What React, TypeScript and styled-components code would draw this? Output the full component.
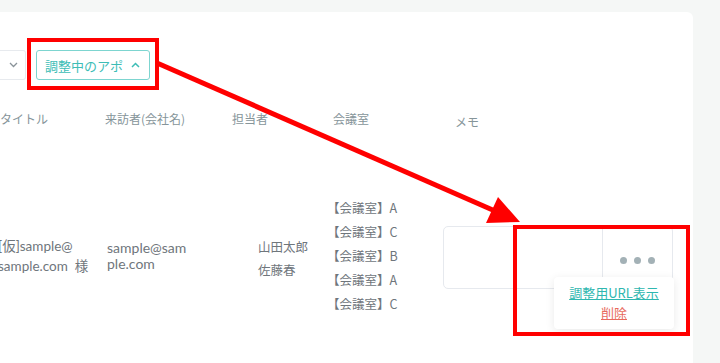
import React from 'react';
import styled, { createGlobalStyle } from 'styled-components';

const GlobalStyle = createGlobalStyle`
  html, body {
    margin: 0;
    padding: 0;
    background-color: #f5f7f6;
    font-family: 'Lato', 'Noto Sans CJK JP', sans-serif;
  }
`;

const Page = styled.div`
  position: relative;
  width: 720px;
  height: 363px;
  overflow: hidden;
  padding-top: 12px;
  box-sizing: border-box;
`;

const Card = styled.div`
  width: 693px;
  height: 351px;
  background-color: #ffffff;
  border-top-right-radius: 6px;
  padding-top: 38px;
  box-sizing: border-box;
`;

const Toolbar = styled.div`
  display: flex;
  align-items: center;
  gap: 10px;
  height: 30px;
`;

const SelectStub = styled.div`
  width: 26px;
  height: 30px;
  box-sizing: border-box;
  border: 1px solid #e7eaee;
  border-left: none;
  border-radius: 0 3px 3px 0;
  display: flex;
  align-items: center;
  justify-content: flex-start;
  padding-left: 9px;
  color: #8a9399;
`;

const StatusButton = styled.div`
  height: 30px;
  width: 114px;
  box-sizing: border-box;
  border: 1px solid #7dd5d0;
  border-radius: 3px;
  display: flex;
  align-items: center;
  padding-left: 8px;
  gap: 8px;
  color: #3dbdb6;
  font-size: 13px;
  font-family: 'Noto Sans CJK JP', sans-serif;
`;

const HeaderRow = styled.div`
  display: flex;
  align-items: center;
  margin-top: 28px;
  height: 20px;
  color: #86959a;
  font-size: 12px;
  font-family: 'Noto Sans CJK JP', sans-serif;
`;

const HeadCell = styled.div<{ $w: number; $dy?: number }>`
  width: ${(p) => p.$w}px;
  flex-shrink: 0;
  padding-top: ${(p) => p.$dy || 0}px;
`;

const BodyRow = styled.div`
  display: flex;
  align-items: center;
  margin-top: 78px;
  height: 100px;
  color: #6f767c;
  font-size: 13.5px;
`;

const Cell = styled.div<{ $w: number }>`
  width: ${(p) => p.$w}px;
  flex-shrink: 0;
  line-height: 19px;
`;

const TitleCell = styled(Cell)`
  margin-left: -2px;
  line-height: 20px;
`;

const VisitorCell = styled(Cell)`
  font-size: 14px;
  line-height: 16px;
`;

const StaffCell = styled(Cell)`
  font-family: 'Noto Sans CJK JP', sans-serif;
  font-size: 12.5px;
  line-height: 23px;
  padding-left: 26px;
  padding-top: 4px;
  box-sizing: border-box;
`;

const RoomList = styled(Cell)`
  font-family: 'Noto Sans CJK JP', sans-serif;
  font-size: 12.5px;
  line-height: 24px;
  margin-left: -6px;
`;

const MemoBox = styled.div`
  margin-left: -6px;
  margin-top: 2px;
  display: flex;
  width: 230px;
  height: 63px;
  border: 1px solid #e6e9ee;
  border-radius: 5px;
  box-sizing: border-box;
`;

const MemoArea = styled.div`
  width: 158px;
  border-right: 1px solid #e6e9ee;
`;

const ActionCell = styled.div`
  position: relative;
  flex: 1;
  display: flex;
  justify-content: center;
  align-items: center;
  gap: 7px;
  padding-top: 6px;
`;

const Dot = styled.span`
  width: 7px;
  height: 7px;
  border-radius: 50%;
  background-color: #a3b1b6;
`;

const Popup = styled.div`
  position: absolute;
  top: 50px;
  right: -2px;
  width: 120px;
  height: 52px;
  background-color: #ffffff;
  border-radius: 4px;
  box-shadow: 0 2px 10px rgba(0, 0, 0, 0.09);
  display: flex;
  flex-direction: column;
  align-items: center;
  justify-content: center;
  gap: 1px;
  font-family: 'Noto Sans CJK JP', sans-serif;
  font-size: 13px;
  line-height: 19px;
`;

const PopupLink = styled.a<{ $danger?: boolean }>`
  color: ${(p) => (p.$danger ? '#e86a5c' : '#2fb7b0')};
  text-decoration: underline;
  cursor: pointer;
`;

const Annotation = styled.svg`
  position: absolute;
  left: 0;
  top: 0;
  pointer-events: none;
`;

export default function App() {
  return (
    <>
      <GlobalStyle />
      <Page>
        <Card>
          <Toolbar>
            <SelectStub>
              <svg width="9" height="6" viewBox="0 0 9 6">
                <path d="M1 1l3.5 3.5L8 1" fill="none" stroke="#8a9399" strokeWidth="1.3" />
              </svg>
            </SelectStub>
            <StatusButton>
              <span>調整中のアポ</span>
              <svg width="9" height="6" viewBox="0 0 9 6">
                <path d="M1 5l3.5-3.5L8 5" fill="none" stroke="#3dbdb6" strokeWidth="1.5" />
              </svg>
            </StatusButton>
          </Toolbar>
          <HeaderRow>
            <HeadCell $w={105}>タイトル</HeadCell>
            <HeadCell $w={127}>来訪者(会社名)</HeadCell>
            <HeadCell $w={101}>担当者</HeadCell>
            <HeadCell $w={122}>会議室</HeadCell>
            <HeadCell $w={60} $dy={7}>メモ</HeadCell>
          </HeaderRow>
          <BodyRow>
            <TitleCell $w={109}>
              <div>[仮]sample@</div>
              <div>sample.com&nbsp; 様</div>
            </TitleCell>
            <VisitorCell $w={125}>
              <div>sample@sam</div>
              <div>ple.com</div>
            </VisitorCell>
            <StaffCell $w={101}>
              <div>山田太郎</div>
              <div>佐藤春</div>
            </StaffCell>
            <RoomList $w={122}>
              <div>【会議室】A</div>
              <div>【会議室】C</div>
              <div>【会議室】B</div>
              <div>【会議室】A</div>
              <div>【会議室】C</div>
            </RoomList>
            <MemoBox>
              <MemoArea />
              <ActionCell>
                <Dot />
                <Dot />
                <Dot />
                <Popup>
                  <PopupLink>調整用URL表示</PopupLink>
                  <PopupLink $danger>削除</PopupLink>
                </Popup>
              </ActionCell>
            </MemoBox>
          </BodyRow>
        </Card>
        <Annotation width="720" height="363" viewBox="0 0 720 363">
          <rect x="29" y="40" width="128" height="48" fill="none" stroke="#ff0000" strokeWidth="4" />
          <line x1="157" y1="63" x2="495" y2="211" stroke="#ff0000" strokeWidth="5" />
          <polygon points="520,222 486,223 498,197" fill="#ff0000" />
          <rect x="515" y="227" width="173" height="107" fill="none" stroke="#ff0000" strokeWidth="4" />
        </Annotation>
      </Page>
    </>
  );
}
